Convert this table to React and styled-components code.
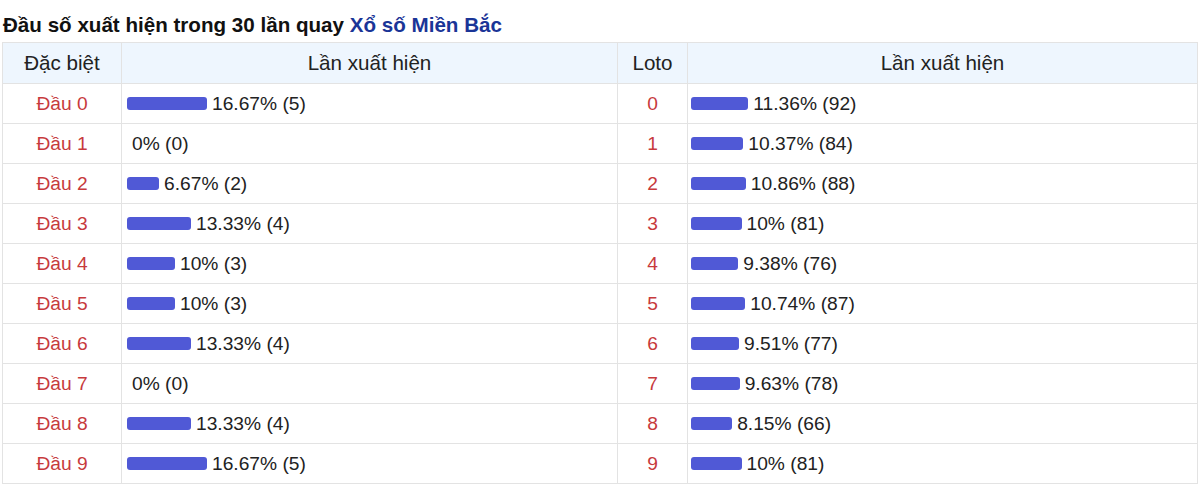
import React from 'react';
import styled, { createGlobalStyle } from 'styled-components';

const GlobalStyle = createGlobalStyle`
    body {
        margin: 0;
        background: #fff;
        font-family: "Liberation Sans", Arial, sans-serif;
        color: #222;
    }
`

const Wrapper = styled.div`
    padding: 0 2px;
`

const Title = styled.h2`
    margin: 0;
    box-sizing: border-box;
    height: 42px;
    padding: 13px 0 0 1px;
    font-size: 20.6px;
    font-weight: bold;
    line-height: 24px;
    color: #111;
`

const TitleLink = styled.span`
    color: #1a3597;
`

const Grid = styled.div`
    display: grid;
    grid-template-columns: 119px 496px 70px 1fr;
    border-top: 1px solid #e3e3e3;
    border-left: 1px solid #e3e3e3;
`

const Cell = styled.div`
    box-sizing: border-box;
    height: 40px;
    border-right: 1px solid #e3e3e3;
    border-bottom: 1px solid #e3e3e3;
    background: #fff;
    display: flex;
    align-items: center;
    justify-content: ${p => (p.$center ? 'center' : 'flex-start')};
    padding-left: ${p => (p.$center ? 0 : p.$pad || 5)}px;
    font-size: 19.2px;
    color: ${p => (p.$red ? '#c73a3c' : '#222')};
`

const HeadCell = styled(Cell)`
    height: 41px;
    background: #eef6fe;
    font-size: 20.6px;
    color: #222;
`

const Bar = styled.span`
    display: inline-block;
    height: 13px;
    background: #5059d6;
    border-radius: 3px;
    margin-right: 5px;
    flex-shrink: 0;
`

const dacBiet = [
    ['16.67', 5], ['0', 0], ['6.67', 2], ['13.33', 4], ['10', 3],
    ['10', 3], ['13.33', 4], ['0', 0], ['13.33', 4], ['16.67', 5],
];

const loto = [
    ['11.36', 92], ['10.37', 84], ['10.86', 88], ['10', 81], ['9.38', 76],
    ['10.74', 87], ['9.51', 77], ['9.63', 78], ['8.15', 66], ['10', 81],
];

const App = () => {
    return (
        <Wrapper>
            <GlobalStyle />
            <Title>
                Đầu số xuất hiện trong 30 lần quay <TitleLink>Xổ số Miền Bắc</TitleLink>
            </Title>
            <Grid>
                <HeadCell $center>Đặc biệt</HeadCell>
                <HeadCell $center>Lần xuất hiện</HeadCell>
                <HeadCell $center>Loto</HeadCell>
                <HeadCell $center>Lần xuất hiện</HeadCell>
                {dacBiet.map((d, i) => (
                    <React.Fragment key={i}>
                        <Cell $center $red>Đầu {i}</Cell>
                        <Cell>
                            <Bar style={{ width: parseFloat(d[0]) * 4.8 }} />
                            {d[0]}% ({d[1]})
                        </Cell>
                        <Cell $center $red>{i}</Cell>
                        <Cell $pad={3}>
                            <Bar style={{ width: parseFloat(loto[i][0]) * 5.05 }} />
                            {loto[i][0]}% ({loto[i][1]})
                        </Cell>
                    </React.Fragment>
                ))}
            </Grid>
        </Wrapper>
    );
};

export default App;
